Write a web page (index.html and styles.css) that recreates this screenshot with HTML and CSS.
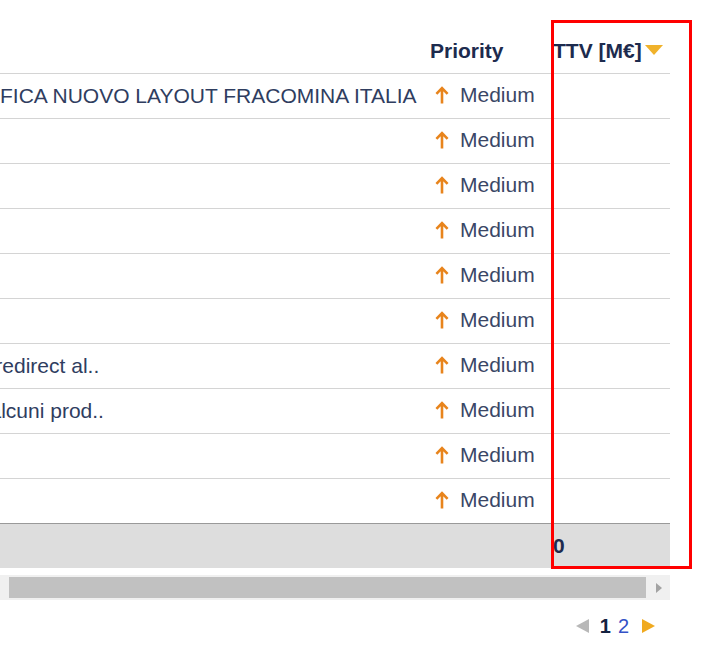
FILE: index.html
```html
<!DOCTYPE html>
<html lang="it">
<head>
  <meta charset="UTF-8" />
  <meta name="viewport" content="width=device-width, initial-scale=1.0" />
  <title>Richieste</title>
  <link rel="stylesheet" href="styles.css">
</head>
<body>
  <div class="page">
    <div class="grid">
      <div class="grid-view">
        <table class="tbl">
          <colgroup>
            <col class="c-desc">
            <col class="c-prio">
            <col class="c-ttv">
          </colgroup>
          <thead>
            <tr>
              <th></th>
              <th>Priority</th>
              <th class="sorted">TTV [M€]<span class="sort-tri"></span></th>
            </tr>
          </thead>
          <tbody id="rows"></tbody>
          <tfoot>
            <tr>
              <td></td>
              <td></td>
              <td class="total">0</td>
            </tr>
          </tfoot>
        </table>
      </div>
      <div class="hscroll">
        <div class="hscroll-thumb"></div>
        <div class="hscroll-btn"><span class="tri-right"></span></div>
      </div>
    </div>

    <div class="pager">
      <span class="pg-prev"></span>
      <span class="pg-num current">1</span>
      <a class="pg-num" href="#">2</a>
      <span class="pg-next"></span>
    </div>

    <div class="highlight"></div>
  </div>

  <script>
    const titles = [
      "VERIFICA NUOVO LAYOUT FRACOMINA ITALIA",
      "", "", "", "", "",
      "Test redirect al..",
      "Per alcuni prod..",
      "", ""
    ];
    const arrow = '<svg class="prio-icon" viewBox="0 0 14 18" width="14" height="18">' +
      '<path d="M7 17.5V2.2M1.4 7.8L7 2.2l5.6 5.6" fill="none" stroke="#e8841c" stroke-width="2.6"/></svg>';
    const body = document.getElementById('rows');
    titles.forEach(t => {
      const tr = document.createElement('tr');
      tr.innerHTML = '<td class="desc">' + t + '</td>' +
        '<td><span class="prio">' + arrow + 'Medium</span></td>' +
        '<td></td>';
      body.appendChild(tr);
    });
  </script>
</body>
</html>
```

FILE: styles.css
```css
* { box-sizing: border-box; }
html, body { margin: 0; padding: 0; background: #fff; }
body { font-family: "Liberation Sans", Arial, sans-serif; font-size: 21px; color: #2f3d5f; }

.page { position: relative; width: 709px; height: 652px; padding-top: 29px; }

.grid { width: 670px; }
.grid-view { overflow: hidden; }

.tbl {
  table-layout: fixed;
  width: 727px;
  margin-left: -57px;
  border-collapse: separate;
  border-spacing: 0;
}
.c-desc { width: 479px; }
.c-prio { width: 123px; }
.c-ttv { width: 125px; }

.tbl th, .tbl td {
  height: 45px;
  padding: 0 8px;
  border-bottom: 1px solid #d4d4d4;
  white-space: nowrap;
  overflow: hidden;
  text-align: left;
  vertical-align: middle;
}
.tbl th { color: #1d2b4e; font-weight: bold; }
.tbl tbody tr:last-child td { border-bottom-color: #999; }
.tbl tfoot td {
  height: 44px;
  background: #dddddd;
  border-bottom: none;
}
.tbl td.total { font-weight: bold; color: #1d2b4e; }

.sort-tri {
  display: inline-block;
  width: 0; height: 0;
  margin-left: 3px;
  border-left: 9px solid transparent;
  border-right: 9px solid transparent;
  border-top: 10px solid #f0b22b;
  vertical-align: 3px;
}

.prio { display: inline-flex; align-items: center; gap: 11px; color: #3a4766; padding-left: 5px; }
.prio-icon { display: block; }

.hscroll {
  display: flex;
  align-items: center;
  height: 25px;
  margin-top: 7px;
  padding-left: 9px;
  background: #f0f0f0;
}
.hscroll-thumb { flex: 1; height: 21px; background: #c1c1c1; }
.hscroll-btn { width: 24px; display: flex; justify-content: center; padding-left: 2px; }
.tri-right {
  width: 0; height: 0;
  border-top: 5.5px solid transparent;
  border-bottom: 5.5px solid transparent;
  border-left: 6px solid #a3a3a3;
}

.pager {
  display: flex;
  align-items: center;
  justify-content: flex-end;
  width: 670px;
  margin-top: 14px;
  padding-right: 15px;
  font-size: 20px;
  line-height: 24px;
}
.pg-prev, .pg-next {
  width: 0; height: 0;
  border-top: 7.5px solid transparent;
  border-bottom: 7.5px solid transparent;
}
.pg-prev { border-right: 13px solid #b8b8b8; margin-right: 11px; }
.pg-next { border-left: 13px solid #f0aa20; margin-left: 13px; }
.pg-num { color: #3452c6; text-decoration: none; }
.pg-num.current { color: #142240; font-weight: bold; margin-right: 7px; }

.highlight {
  position: absolute;
  left: 551px;
  top: 20px;
  width: 141px;
  height: 549px;
  border: 3px solid #ff0000;
  pointer-events: none;
}
```
